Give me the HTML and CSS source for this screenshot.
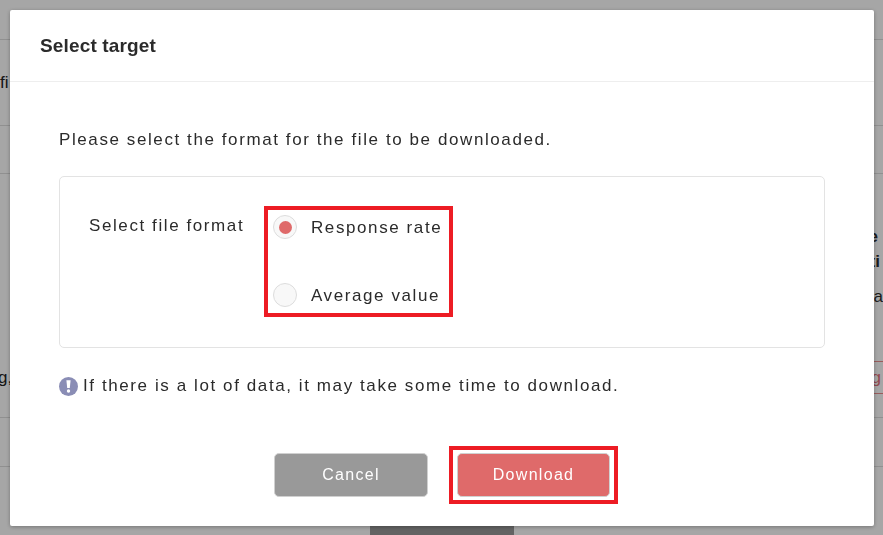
FILE: index.html
```html
<html>
<head>
    <meta charset="utf-8">
    <link rel="stylesheet" href="styles.css">
</head>
<body>
<div class="page">
    <div class="row row-1"></div>
    <div class="row row-2"><span class="back-text">fi</span></div>
    <div class="row row-3"></div>
    <div class="row row-4">
        <span class="back-text back-left">g,</span>
        <div class="back-right">
            <div class="back-bold back-e">e</div>
            <div class="back-bold back-ti">ti</div>
            <div class="back-a">a</div>
            <div class="back-link">g</div>
        </div>
    </div>
    <div class="row row-5"></div>
    <div class="row row-6"><div class="back-button"></div></div>
</div>
<div class="overlay"></div>
<div class="modal">
    <div class="modal-header">Select target</div>
    <div class="modal-body">
        <p class="lead">Please select the format for the file to be downloaded.</p>
        <div class="format-box">
            <div class="format-label">Select file format</div>
            <div class="radio-group">
                <label class="radio-item">
                    <span class="radio radio-active"></span>
                    <span class="radio-text">Response rate</span>
                </label>
                <label class="radio-item">
                    <span class="radio"></span>
                    <span class="radio-text">Average value</span>
                </label>
            </div>
        </div>
        <div class="note">
            <svg class="note-icon" viewBox="0 0 19 19">
                <circle cx="9.5" cy="9.5" r="9.5" fill="#8a8db5"/>
                <path d="M7.4 3.2h4.2l-.8 7.8H8.2z" fill="#fff"/>
                <circle cx="9.5" cy="14" r="1.7" fill="#fff"/>
            </svg>
            <span>If there is a lot of data, it may take some time to download.</span>
        </div>
    </div>
    <div class="modal-footer">
        <button class="btn btn-cancel">Cancel</button>
        <div class="btn-mark">
            <button class="btn btn-download">Download</button>
        </div>
    </div>
</div>
</body>
</html>
```

FILE: styles.css
```css
html, body{
    margin: 0;
    height: 100%;
    overflow: hidden;
}
body{
    font-family: "Liberation Sans", Arial, sans-serif;
    color: #2b2b2b;
    background: #fff;
}
.page{
    height: 535px;
}
.row{
    border-bottom: 1px solid #ddd;
    display: flex;
    justify-content: space-between;
    font-size: 17px;
}
.row-1{ height: 39px; }
.row-2{ height: 85px; align-items: center; }
.row-3{ height: 47px; }
.row-4{ height: 243px; }
.row-5{ height: 48px; }
.row-6{ height: 68px; border-bottom: 0; justify-content: center; align-items: flex-end; }
.back-text{
    color: #222;
}
.back-left{
    margin-top: 194px;
    margin-left: -2px;
}
.back-right{
    width: 30px;
    padding-top: 50px;
    text-align: right;
}
.back-bold{
    font-weight: bold;
    height: 25px;
    line-height: 25px;
}
.back-e{
    margin-right: 5px;
}
.back-ti{
    margin-right: 3px;
}
.back-a{
    margin-top: 10px;
    height: 25px;
    line-height: 25px;
}
.back-link{
    margin-top: 52px;
    height: 31px;
    line-height: 31px;
    padding-right: 2px;
    color: #e0707a;
    border-top: 1px solid #eb8e8e;
    border-bottom: 1px solid #eb8e8e;
}
.back-button{
    width: 144px;
    height: 20px;
    background: #999;
}
.overlay{
    position: fixed;
    top: 0;
    left: 0;
    right: 0;
    bottom: 0;
    background: rgba(0, 0, 0, 0.35);
}
.modal{
    position: fixed;
    top: 10px;
    left: 10px;
    width: 864px;
    height: 516px;
    background: #fff;
    border-radius: 2px;
    box-shadow: 0 1px 4px rgba(0, 0, 0, 0.3);
    display: flex;
    flex-direction: column;
}
.modal-header{
    height: 71px;
    line-height: 71px;
    padding-left: 30px;
    font-size: 19px;
    font-weight: bold;
    color: #2b2b2b;
    border-bottom: 1px solid #eee;
    letter-spacing: 0.15px;
}
.modal-body{
    padding: 47px 49px 0;
    flex: 1;
}
.lead{
    margin: 0;
    font-size: 17px;
    line-height: 22px;
    letter-spacing: 1.59px;
}
.format-box{
    margin-top: 25px;
    width: 766px;
    height: 172px;
    box-sizing: border-box;
    border: 1px solid #e3e3e3;
    border-radius: 5px;
    display: flex;
    align-items: flex-start;
    padding: 29px 0 0 29px;
    font-size: 17px;
    letter-spacing: 1.59px;
}
.format-label{
    line-height: 22px;
    margin-top: 9px;
    width: 175px;
}
.radio-group{
    border: 4px solid #ed1c24;
    width: 189px;
    height: 111px;
    box-sizing: border-box;
    padding: 5px 0 0 5px;
}
.radio-item{
    display: flex;
    align-items: center;
    gap: 14px;
    height: 24px;
    margin-bottom: 44px;
}
.radio-text{
    padding-top: 2px;
}
.radio{
    width: 24px;
    height: 24px;
    box-sizing: border-box;
    border: 1px solid #ddd;
    border-radius: 50%;
    background: #f8f8f8;
    display: flex;
    align-items: center;
    justify-content: center;
}
.radio-active:after{
    content: '';
    width: 13px;
    height: 13px;
    border-radius: 50%;
    background: #df6a6a;
}
.note{
    margin-top: 27px;
    display: flex;
    align-items: center;
    gap: 5px;
    font-size: 17px;
    line-height: 22px;
    letter-spacing: 1.59px;
}
.note-icon{
    width: 19px;
    height: 19px;
}
.modal-footer{
    display: flex;
    align-items: center;
    padding: 0 0 22px 264px;
    gap: 21px;
}
.btn{
    width: 154px;
    height: 44px;
    border: 1px solid #d0d0d0;
    border-radius: 5px;
    color: #fff;
    font-family: inherit;
    font-size: 16px;
    letter-spacing: 1.3px;
}
.btn-cancel{
    background: #999;
}
.btn-download{
    width: 153px;
    background: #df6a6a;
    display: block;
}
.btn-mark{
    border: 4px solid #ed1c24;
    padding: 3px 4px 3px;
}
```
